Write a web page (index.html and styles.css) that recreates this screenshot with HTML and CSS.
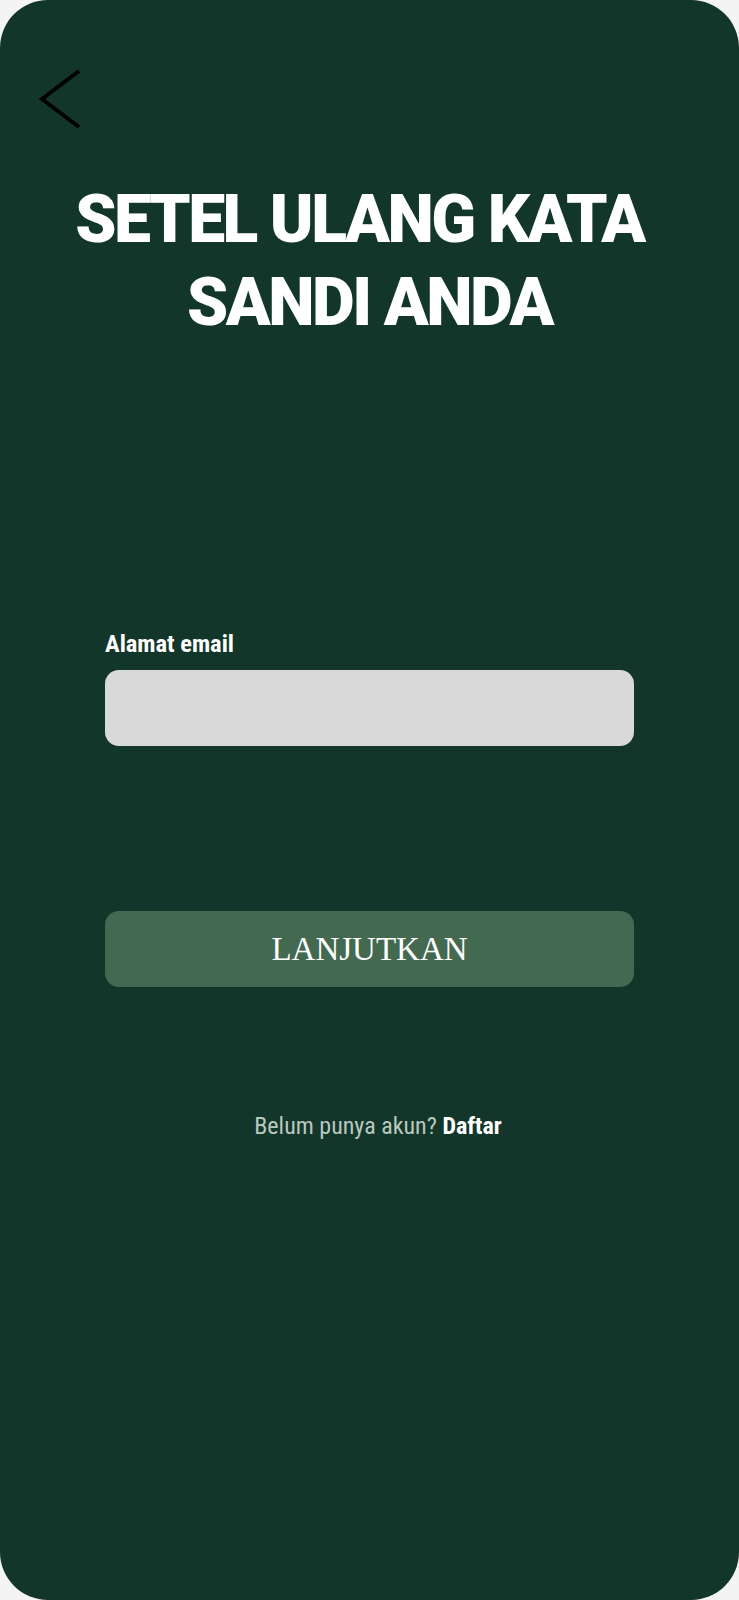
FILE: index.html
```html
<!DOCTYPE html>
<html lang="id">
<head>
<meta charset="utf-8">
<title>Setel Ulang Kata Sandi</title>
<link rel="stylesheet" href="styles.css">
</head>
<body>
<div class="screen">
  <a class="back" href="#" aria-label="Kembali">
    <svg width="50" height="70" viewBox="0 0 50 70"><path d="M44 7 L7 35 L44 63" fill="none" stroke="#000" stroke-width="4"/></svg>
  </a>
  <h1 class="title"><span class="line1">SETEL ULANG KATA</span><span class="line2">SANDI ANDA</span></h1>
  <form class="form">
    <label class="label" for="email">Alamat email</label>
    <input class="input" id="email" type="email">
    <button class="btn" type="button">LANJUTKAN</button>
  </form>
  <p class="footer">Belum punya akun? <b>Daftar</b></p>
</div>
</body>
</html>
```
FILE: styles.css
```css
html, body { margin: 0; padding: 0; background: #f4f4f4; }
.screen {
  background: #13362b;
  min-height: 1600px;
  border-radius: 48px;
  box-sizing: border-box;
  padding-top: 64px;
  display: flex;
  flex-direction: column;
}
.back { display: block; margin-left: 35px; width: 50px; height: 70px; }
.back svg { display: block; }
.title {
  margin: 44px 0 0;
  color: #fff;
  font-family: Roboto, sans-serif;
  font-weight: 900;
  font-size: 66px;
  line-height: 83px;
  text-align: center;
  letter-spacing: -2.5px;
}
.title span { display: block; }
.title .line1 { padding-right: 20px; }
.form {
  display: flex;
  flex-direction: column;
  margin: 285px 105px 0;
}
.label {
  color: #fff;
  font-family: "Roboto Condensed", Roboto, sans-serif;
  font-stretch: condensed;
  font-weight: 700;
  font-size: 24.5px;
  line-height: 30px;
}
.input {
  margin-top: 11px;
  height: 76px;
  border: none;
  border-radius: 14px;
  background: #d9d9d9;
  box-sizing: border-box;
}
.btn {
  margin-top: 165px;
  height: 76px;
  border: none;
  border-radius: 14px;
  background: #436a51;
  color: #fff;
  font-family: "Liberation Serif", serif;
  font-size: 33px;
}
.footer {
  margin: 124px 0 0;
  padding-left: 17px;
  text-align: center;
  color: #b9c7bf;
  font-family: "Roboto Condensed", Roboto, sans-serif;
  font-stretch: condensed;
  font-size: 24px;
  line-height: 30px;
}
.footer b { color: #fff; font-weight: 700; }
```
